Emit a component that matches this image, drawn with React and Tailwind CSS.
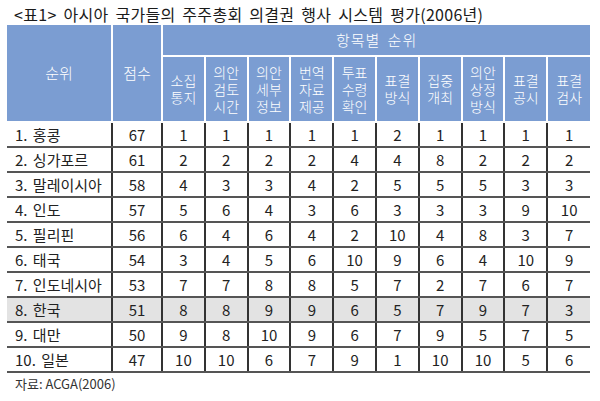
import React from "react";

const subHeads = [
  ["소집", "통지"],
  ["의안", "검토", "시간"],
  ["의안", "세부", "정보"],
  ["번역", "자료", "제공"],
  ["투표", "수령", "확인"],
  ["표결", "방식"],
  ["집중", "개최"],
  ["의안", "상정", "방식"],
  ["표결", "공시"],
  ["표결", "검사"],
];

const rows = [
  ["1. 홍콩", 67, [1, 1, 1, 1, 1, 2, 1, 1, 1, 1]],
  ["2. 싱가포르", 61, [2, 2, 2, 2, 4, 4, 8, 2, 2, 2]],
  ["3. 말레이시아", 58, [4, 3, 3, 4, 2, 5, 5, 5, 3, 3]],
  ["4. 인도", 57, [5, 6, 4, 3, 6, 3, 3, 3, 9, 10]],
  ["5. 필리핀", 56, [6, 4, 6, 4, 2, 10, 4, 8, 3, 7]],
  ["6. 태국", 54, [3, 4, 5, 6, 10, 9, 6, 4, 10, 9]],
  ["7. 인도네시아", 53, [7, 7, 8, 8, 5, 7, 2, 7, 6, 7]],
  ["8. 한국", 51, [8, 8, 9, 9, 6, 5, 7, 9, 7, 3]],
  ["9. 대만", 50, [9, 8, 10, 9, 6, 7, 9, 5, 7, 5]],
  ["10. 일본", 47, [10, 10, 6, 7, 9, 1, 10, 10, 5, 6]],
];

export default function App() {
  return (
    <div
      className="w-[600px] h-[401px] bg-white text-[#222] overflow-hidden font-normal"
      style={{ fontFamily: '"Noto Sans CJK KR", "Noto Sans", sans-serif' }}
    >
      <div className="pl-[14px] pt-[3px] h-[25px] text-[16px] leading-[22px] tracking-[0.3px] [word-spacing:3px] text-[#1a1a1a]">
        &lt;표1&gt; 아시아 국가들의 주주총회 의결권 행사 시스템 평가(2006년)
      </div>
      <table className="ml-[7px] w-[583px] table-fixed border-collapse text-[15px]">
        <colgroup>
          <col className="w-[105px]" />
          <col className="w-[50px]" />
          {subHeads.map((_, i) => (
            <col key={i} className="w-[42.8px]" />
          ))}
        </colgroup>
        <thead className="text-white">
          <tr className="h-[31px]">
            <th
              rowSpan={2}
              className="bg-[#7b9dd2] font-light border-r-2 border-b-2 border-white"
            >
              순위
            </th>
            <th
              rowSpan={2}
              className="bg-[#7b9dd2] font-light border-r-2 border-b-2 border-white"
            >
              점수
            </th>
            <th
              colSpan={10}
              className="bg-[#7b9dd2] font-light border-b-2 border-white tracking-[1px] [word-spacing:3px]"
            >
              항목별 순위
            </th>
          </tr>
          <tr className="h-[66px]">
            {subHeads.map((lines, i) => (
              <th
                key={i}
                className={`bg-[#7b9dd2] font-light text-[14px] leading-[17px] border-b-2 border-white ${
                  i < 9 ? "border-r-2" : ""
                }`}
              >
                {lines.map((l, j) => (
                  <div key={j}>{l}</div>
                ))}
              </th>
            ))}
          </tr>
        </thead>
        <tbody>
          {rows.map(([name, score, vals], ri) => (
            <tr
              key={ri}
              className={`h-[25px] leading-[20px] ${ri === 7 ? "bg-[#e3e3e3]" : ""}`}
            >
              <td className="pl-[8px] border-b-2 border-b-[#555] border-r-2 border-r-[#333] text-left [word-spacing:2px]">
                {name}
              </td>
              <td className="text-center border-b-2 border-b-[#555] border-r-2 border-r-[#333]">
                {score}
              </td>
              {vals.map((v, vi) => (
                <td
                  key={vi}
                  className={`text-center border-b-2 border-b-[#555] ${
                    vi < 9 ? "border-r-2 border-r-[#333]" : ""
                  }`}
                >
                  {v}
                </td>
              ))}
            </tr>
          ))}
        </tbody>
      </table>
      <div className="pl-[15px] pt-[2px] text-[13px] leading-[18px] text-[#333]">
        자료: ACGA(2006)
      </div>
    </div>
  );
}
